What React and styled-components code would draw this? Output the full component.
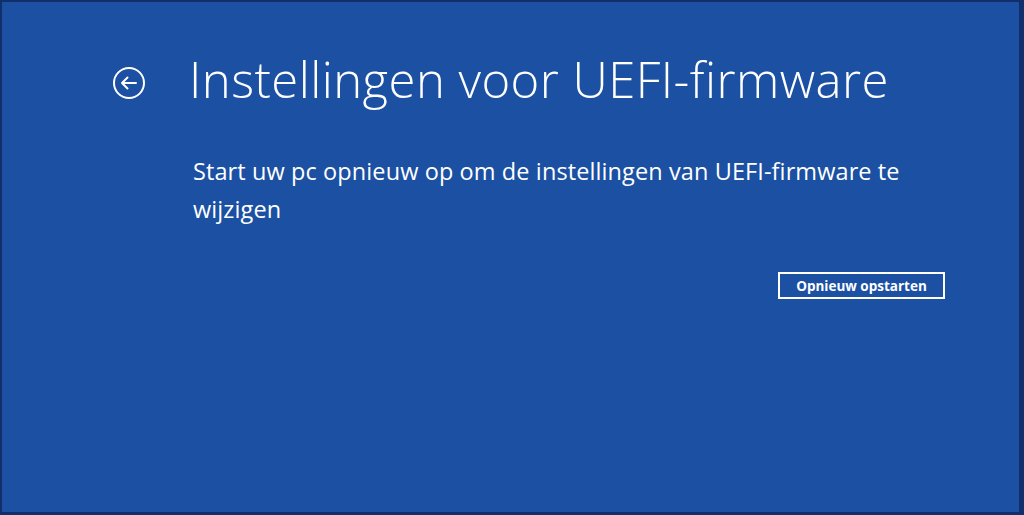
import React from "react";
import styled, { createGlobalStyle } from "styled-components";

const Global = createGlobalStyle`
  html, body { margin: 0; padding: 0; background: #1b50a2; }
  #root { width: 1024px; height: 515px; }
`;

const Frame = styled.div`
  box-sizing: border-box;
  width: 1024px;
  height: 515px;
  background: #1b50a2;
  border: 2px solid #122f6b;
  border-right-width: 5px;
  border-bottom-width: 3px;
  padding: 47px 0 0 109px;
  color: #ffffff;
  font-family: "Open Sans", "Noto Sans", sans-serif;
`;

const Header = styled.div`
  display: flex;
  align-items: center;
  gap: 42px;
`;

const BackButton = styled.button`
  background: none;
  border: none;
  padding: 0;
  width: 36px;
  height: 36px;
  display: flex;
  align-items: center;
  justify-content: center;
  color: #ffffff;
  margin-top: 7px;
`;

const Title = styled.h1`
  margin: 0;
  font-weight: 300;
  font-size: 49px;
  line-height: 60px;
  letter-spacing: 0.45px;
`;

const Body = styled.div`
  padding-left: 82px;
  margin-top: 43px;
  width: 724px;
`;

const Description = styled.p`
  margin: 0;
  font-weight: 400;
  font-size: 23.5px;
  line-height: 38px;
  letter-spacing: 0.1px;
`;

const Actions = styled.div`
  display: flex;
  justify-content: flex-end;
  width: 834px;
  margin-top: 44px;
`;

const RestartButton = styled.button`
  box-sizing: border-box;
  width: 167px;
  height: 27px;
  background: transparent;
  border: 2px solid #ffffff;
  color: #ffffff;
  font-family: "Open Sans", "Noto Sans", sans-serif;
  font-weight: 700;
  font-size: 13.5px;
  padding: 0;
`;

const BackIcon = () => (
  <svg width="36" height="36" viewBox="0 0 36 36" fill="none" stroke="currentColor" strokeWidth="2">
    <circle cx="18" cy="18" r="15" />
    <path d="M25 18H11M16.5 12.5L11 18l5.5 5.5" strokeLinecap="round" strokeLinejoin="round" />
  </svg>
);

export default function App() {
  return (
    <>
      <Global />
      <Frame>
        <Header>
          <BackButton aria-label="Terug">
            <BackIcon />
          </BackButton>
          <Title>Instellingen voor UEFI-firmware</Title>
        </Header>
        <Body>
          <Description>
            Start uw pc opnieuw op om de instellingen van UEFI-firmware te wijzigen
          </Description>
        </Body>
        <Actions>
          <RestartButton>Opnieuw opstarten</RestartButton>
        </Actions>
      </Frame>
    </>
  );
}
